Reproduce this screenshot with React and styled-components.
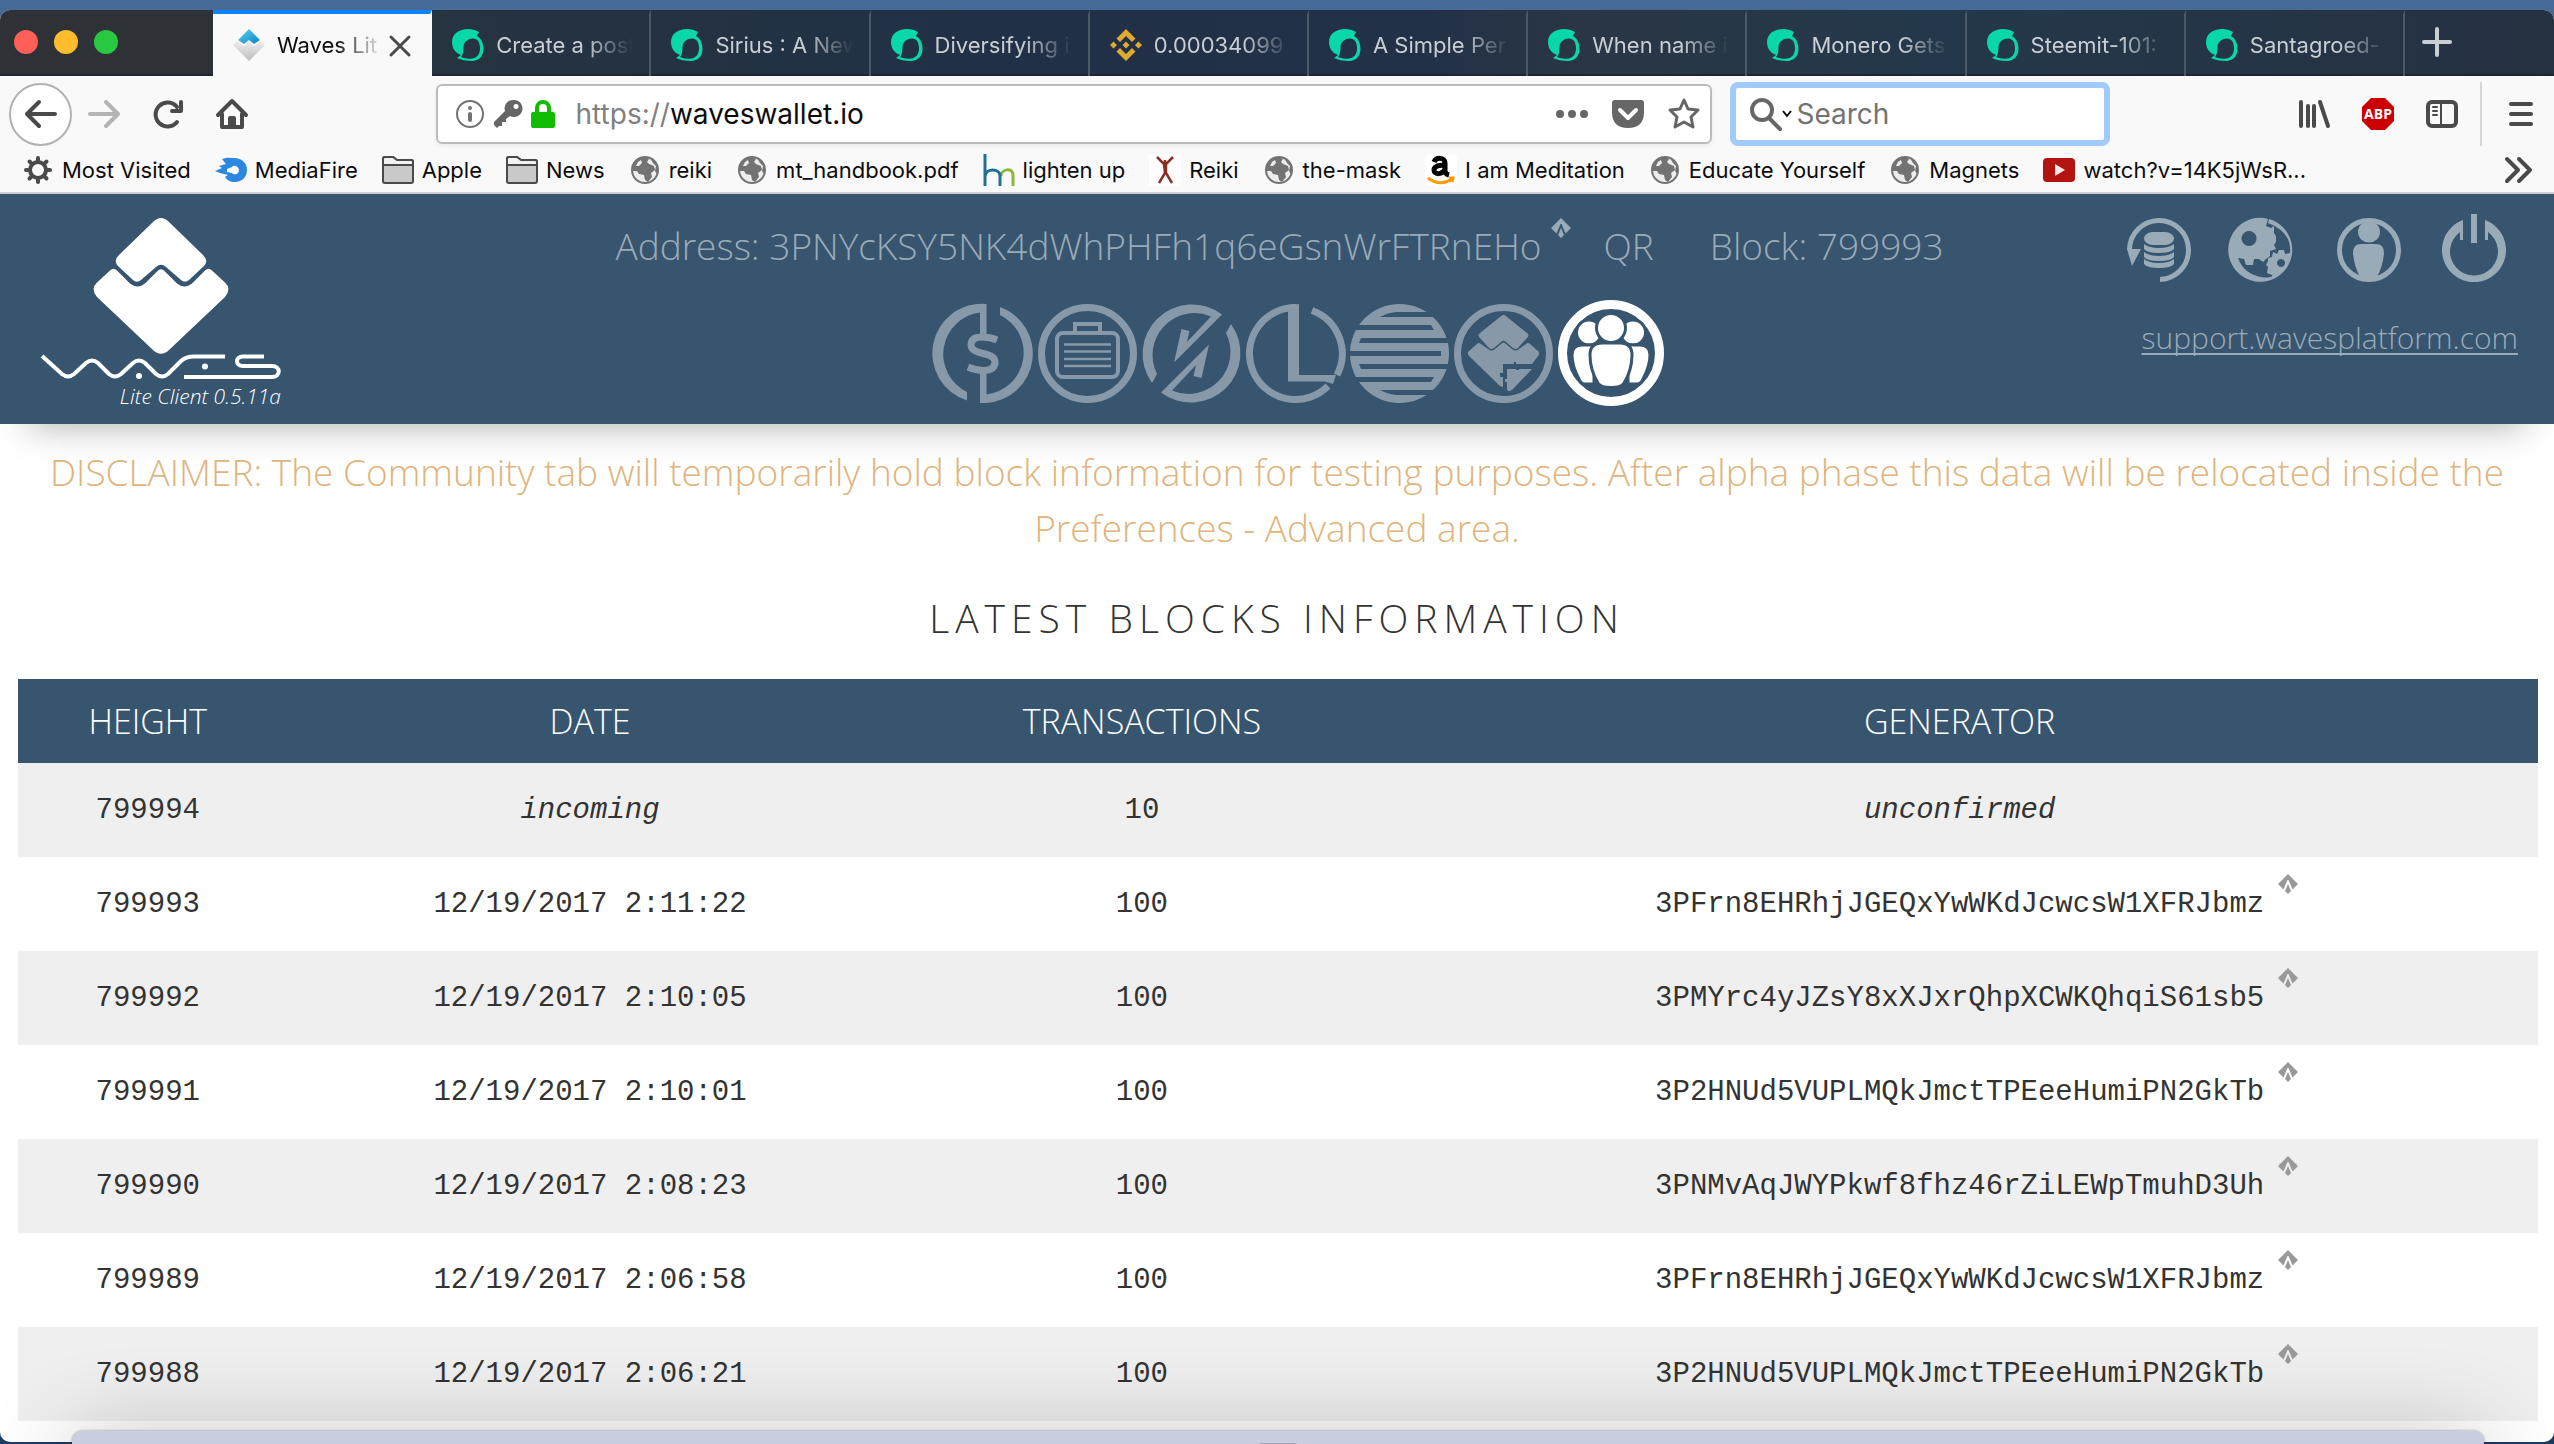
import React from 'react'
import styled, {createGlobalStyle} from 'styled-components'

// Colors
const colors = {
  primary: '#37556f',
  muted: '#9aabb8',
  nav: '#8799a9',
  warning: '#e0b47c',
  text: '#333333',
  stripe: '#efefef',
  chrome: '#f9f9fa',
  icon: '#4a4a4a',
  teal: '#07d7a9'
}

const GlobalStyle = createGlobalStyle`
  * {
    box-sizing: border-box;
  }
  body {
    margin: 0;
    background: #466a98;
    font-family: 'Open Sans', 'Noto Sans', sans-serif;
    color: ${colors.text};
  }
  button {
    padding: 0;
    border: 0;
    background: none;
    font: inherit;
    color: inherit;
    cursor: pointer;
  }
  svg {
    display: block;
    flex: none;
    overflow: visible;
  }
`

// Browser window
const Desktop = styled.div`
  height: 100vh;
  padding: 10px 0 2px;
  overflow: hidden;
  background: linear-gradient(#466a98 50%, #1d3a63);
`

const Window = styled.div`
  height: 100%;
  border-radius: 10px;
  overflow: hidden;
  background: #ffffff;
`

const TabBar = styled.div`
  display: flex;
  height: 66px;
  background: linear-gradient(90deg, #2e3236 0, #2e3236 213px, #263340 440px, #213047 40%, #223048 55%, #2a3645 62%, #24384b 75%, #263142);
  box-shadow: inset 0 -2px #1d2433;
`

const TrafficLights = styled.div`
  display: flex;
  gap: 16px;
  width: 213px;
  padding: 20px 14px;
`

const Light = styled.button`
  width: 24px;
  height: 24px;
  border-radius: 50%;
  background: ${props => props.$color};
`

const Tabs = styled.div`
  flex: 1;
  display: grid;
  grid-template-columns: repeat(10, 1fr);
`

const TabItem = styled.div`
  display: flex;
  align-items: center;
  min-width: 0;
  padding: 0 ${props => props.$active ? 14 : 16}px 0 20px;
  border-right: 2px solid ${props => props.$active ? 'transparent' : '#4d5866'};
  border-top: 4px solid ${props => props.$active ? '#0a84ff' : 'transparent'};
  background: ${props => props.$active ? colors.chrome : 'transparent'};
  color: ${props => props.$active ? '#0c0c0d' : '#c9ced3'};
`

const TabTitle = styled.button`
  flex: 1;
  min-width: 0;
  margin-left: 12px;
  overflow: hidden;
  font-family: Inter, sans-serif;
  font-size: 22px;
  line-height: 32px;
  text-align: left;
  white-space: nowrap;
  mask-image: linear-gradient(90deg, #000 calc(100% - 48px), transparent);
`

const NewTab = styled.button`
  display: flex;
  align-items: center;
  width: 149px;
  padding: 0 16px 2px;
`

const NavBar = styled.div`
  display: flex;
  align-items: center;
  height: 76px;
  padding: 0 20px 0 9px;
  background: ${colors.chrome};
`

const BackButton = styled.button`
  display: flex;
  align-items: center;
  justify-content: center;
  width: 63px;
  height: 63px;
  border: 2px solid #b1b1b1;
  border-radius: 50%;
  background: #ffffff;
`

const ToolButton = styled.button`
  width: 32px;
  height: 32px;
  margin: 0 16px;
`

const Spacer = styled.div`
  flex: 175 1 0;
`

const UrlBar = styled.div`
  flex: 1272 1 0;
  display: flex;
  align-items: center;
  gap: 8px;
  height: 60px;
  padding: 0 10px 0 16px;
  border: 2px solid #bcbcbc;
  border-radius: 6px;
  background: #ffffff;
  box-shadow: 0 2px 4px rgba(0, 0, 0, 0.06);
`

const Url = styled.label`
  flex: 1;
  display: flex;
  margin-left: 12px;
  font-family: Inter, sans-serif;
  font-size: 28px;
  line-height: 36px;
  color: #808080;
`

const UrlInput = styled.input`
  flex: 1;
  min-width: 0;
  padding: 0;
  border: 0;
  outline: 0;
  font: inherit;
  color: #0c0c0d;
`

const PageActions = styled.div`
  display: flex;
  gap: 24px;
`

const SearchBar = styled.label`
  display: flex;
  align-items: center;
  width: 380px;
  height: 64px;
  margin-left: 18px;
  padding: 0 12px 0 14px;
  border: 6px solid #a0cbff;
  border-radius: 8px;
  background: #ffffff;
`

const SearchInput = styled.input`
  width: 100%;
  margin-left: 4px;
  padding: 0;
  border: 0;
  outline: 0;
  font-family: Inter, sans-serif;
  font-size: 28px;
  line-height: 36px;
  &::placeholder {
    color: #737373;
    opacity: 1;
  }
`

const MenuButton = styled.button`
  display: flex;
  align-items: center;
  height: 64px;
  margin-left: 6px;
  padding-left: 26px;
  border-left: 2px solid #d7d7db;
`

const Bookmarks = styled.div`
  display: flex;
  align-items: center;
  gap: 24px;
  height: 42px;
  padding: 0 20px 4px 22px;
  border-bottom: 2px solid #d0d0d0;
  background: ${colors.chrome};
`

const Bookmark = styled.a`
  display: flex;
  align-items: center;
  gap: 8px;
  font-family: Inter, sans-serif;
  font-size: 22px;
  line-height: 32px;
  color: #0c0c0d;
  text-decoration: none;
  white-space: nowrap;
`

const More = styled.button`
  margin-left: auto;
`

// Wallet
const Header = styled.header`
  display: grid;
  grid-template-columns: 1fr auto 1fr;
  height: 230px;
  padding: 24px 36px 12px 41px;
  background: ${colors.primary};
  box-shadow: 0 30px 36px -30px rgba(0, 0, 0, 0.35);
`

const Brand = styled.div`
  display: flex;
  flex-direction: column;
  align-items: center;
  width: 240px;
`

const Version = styled.div`
  align-self: flex-end;
  font-size: 21px;
  font-style: italic;
  font-weight: 300;
  line-height: 32px;
  color: #ffffff;
`

const Account = styled.div`
  display: flex;
  flex-direction: column;
  align-items: center;
`

const AccountInfo = styled.div`
  display: flex;
  font-size: 37px;
  font-weight: 300;
  line-height: 56px;
  color: ${colors.muted};
  white-space: nowrap;
`

const Copy = styled.button`
  align-self: flex-start;
  margin-left: 10px;
`

const QrButton = styled.button`
  margin: 0 56px 0 32px;
`

const MainNav = styled.nav`
  display: flex;
  align-items: center;
  gap: 5px;
  height: 106px;
  margin: 26px 0 0 38px;
  color: ${colors.nav};
`

const Side = styled.div`
  display: flex;
  flex-direction: column;
  align-items: flex-end;
  gap: 36px;
  color: ${colors.muted};
`

const Utilities = styled.div`
  display: flex;
  gap: 41px;
  padding-right: 12px;
`

const Support = styled.a`
  font-size: 30px;
  font-weight: 300;
  line-height: 40px;
  color: inherit;
  text-underline-offset: 4px;
  text-decoration-thickness: 2px;
  text-decoration-skip-ink: none;
`

const Disclaimer = styled.p`
  margin: 20px 18px 34px;
  font-size: 37px;
  font-weight: 300;
  line-height: 56px;
  text-align: center;
  color: ${colors.warning};
`

const Title = styled.h1`
  margin: 0 0 33px;
  font-size: 39px;
  font-weight: 300;
  line-height: 56px;
  letter-spacing: 6px;
  text-align: center;
`

const BlockTable = styled.table`
  width: calc(100% - 34px);
  margin: 0 16px 0 18px;
  border-collapse: collapse;
  table-layout: fixed;
  text-align: center;
  th {
    height: 84px;
    padding: 0;
    background: ${colors.primary};
    color: #ffffff;
    font-size: 34px;
    font-weight: 300;
  }
  th:nth-child(1) {
    width: 10.3%;
  }
  th:nth-child(2) {
    width: 24.8%;
  }
  th:nth-child(3) {
    width: 19%;
  }
  td {
    height: 94px;
    padding: 0;
    font-family: 'Liberation Mono', monospace;
    font-size: 29px;
  }
  tbody tr:nth-child(odd) {
    background: ${colors.stripe};
  }
`

const Generator = styled.span`
  position: relative;
`

const CopyBadge = styled.button`
  position: absolute;
  left: 100%;
  top: -14px;
  margin-left: 14px;
  color: #999999;
`

// Window of another app, lying over the lower edge
const BackWindow = styled.div`
  position: fixed;
  left: 72px;
  right: 70px;
  bottom: -40px;
  height: 53px;
  border-radius: 10px;
  background: #c9cfe0;
  box-shadow: 0 0 3px rgba(0, 0, 0, 0.4), 0 10px 90px rgba(0, 0, 0, 0.3);
  &::after {
    content: '';
    display: block;
    width: 40px;
    height: 8px;
    margin: 12px auto;
    border-radius: 4px;
    background: #a3a3b8;
  }
`

// Icons
const Stroke = ({size = 32, color = colors.icon, width = 3, children}) => (
  <svg width={size} height={size} viewBox='0 0 32 32' fill='none' stroke={color} strokeWidth={width} strokeLinecap='round' strokeLinejoin='round'>
    {children}
  </svg>
)

const SteemIcon = () => (
  <svg width='32' height='32' viewBox='0 0 32 32' fill={colors.teal}>
    <path fillRule='evenodd' d='M16 0C20 0 24 1 27 3L25 7C29 9 31.500 14 31.500 20C31.500 27 27 32 20 32C14 32 9 31 5 29L9 26C3 24 0 19 0 13C0 5 7 0 16 0ZM21 9.500C15 9.500 11.500 14 11.500 18C11.500 22 11 26 9 28C13 29.500 16 30 20 29.500C25 29 28 25 28 19.500C28 13 25.500 9.500 21 9.500Z' />
  </svg>
)

const WavesFavicon = () => (
  <svg width='32' height='32' viewBox='0 0 32 32'>
    <defs>
      <linearGradient id='wavesTop' x2='1' y2='1'><stop stopColor='#5fd0ea' /><stop offset='1' stopColor='#0a86c9' /></linearGradient>
      <linearGradient id='wavesBottom' x2='0' y2='1'><stop stopColor='#eeeeee' /><stop offset='1' stopColor='#bdbdbd' /></linearGradient>
    </defs>
    <path fill='url(#wavesTop)' d='M16 0L27 11L21 15L16 11L11 15L5 11Z' />
    <path fill='url(#wavesBottom)' d='M4 12L11 17L16 12L21 17L28 12L32 16L16 32L0 16Z' />
  </svg>
)

const BinanceIcon = () => (
  <svg width='32' height='32' viewBox='0 0 32 32' fill='#e0aa2e'>
    <path d='M16 0L25.500 9.500L22 13L16 7L10 13L6.500 9.500ZM16 32L6.500 22.500L10 19L16 25L22 19L25.500 22.500ZM3.500 12.500L7 16L3.500 19.500L0 16ZM28.500 12.500L32 16L28.500 19.500L25 16ZM16 12.500L19.500 16L16 19.500L12.500 16Z' />
  </svg>
)

const GlobeIcon = () => (
  <svg width='32' height='32' viewBox='0 0 32 32'>
    <circle cx='16' cy='16' r='13' fill='#ededed' stroke='#737373' strokeWidth='2' />
    <path fill='#737373' d='M4 11C7 5 12 3 17 3L20 5L18 8L20 10L25 12L26 16L22 19L23 23L19 28L16 26L15 21L10 20L8 17L4 17ZM21 4C26 6 29 11 29 16L28 20L26 17L27 12L24 9Z' />
    <path fill='#ededed' d='M9 8L12 6L13 9L10 12L7 12Z' />
  </svg>
)

const FolderIcon = () => (
  <svg width='32' height='32' viewBox='0 0 32 32' fill='#c9c9c9' stroke='#4a4a4a' strokeWidth='2' strokeLinejoin='round'>
    <path d='M1 27V5Q1 3 3 3H11L15 6H29Q31 6 31 8V27Q31 29 29 29H3Q1 29 1 27Z' />
    <path fill='#f2f2f2' d='M1 11V5Q1 3 3 3H11L15 6H29Q31 6 31 8V11Z' />
  </svg>
)

const GearIcon = () => (
  <Stroke width={4}>
    <circle cx='16' cy='16' r='8' />
    <path d='M16 4V6M16 26V28M4 16H6M26 16H28M7.500 7.500L9 9M23 23L24.500 24.500M24.500 7.500L23 9M9 23L7.500 24.500' />
  </Stroke>
)

const MediaFireIcon = () => (
  <svg width='32' height='32' viewBox='0 0 32 32'>
    <path fill='#2b87e0' d='M7 5C12 3 16 4 19 4C27 4 32 9 32 16C32 23 27 28 20 28C15 28 12 26 10 23L13 21L5 19L0 17L7 14L4 12L11 10Z' />
    <path fill='#ffffff' d='M12 15L17 13C18 11 23 11 24 16C24 21 18 21 17 19L12 18Z' />
  </svg>
)

const HnIcon = () => (
  <svg width='32' height='32' viewBox='0 0 32 32' fill='none' strokeWidth='3'>
    <path stroke='#8cb83a' d='M18 22C18 15 30 13 30 21V32' />
    <path stroke='#1c7391' d='M2 0V32M2 22C3 14 17 14 17 22V32' />
  </svg>
)

const FigureIcon = () => (
  <svg width='32' height='32' viewBox='0 0 32 32'>
    <path fill='#ffffff' d='M0 0H32V32H0Z' />
    <path fill='none' stroke='#8a2f24' strokeWidth='2.500' d='M8 3L15 10L16 19L10 29M24 3L17 10V19L23 29M16 6V20' />
  </svg>
)

const AmazonIcon = () => (
  <svg width='32' height='32' viewBox='0 0 32 32' fill='none'>
    <rect width='32' height='32' rx='5' fill='#ffffff' />
    <path stroke='#000000' strokeWidth='5' d='M9 8C11 3 20 3 20 9V17Q20 20 24 21M20 11C13 11 9 12 9 16C9 21 18 21 20 15' />
    <path stroke='#ff9900' strokeWidth='3' d='M3 24Q15 33 27 25M24 24L28 24L27 28' />
  </svg>
)

const YoutubeIcon = () => (
  <svg width='32' height='32' viewBox='0 0 32 32'>
    <rect y='4' width='32' height='24' rx='4' fill='#b3140f' />
    <path fill='#f3e9e9' d='M12 10L22 16L12 22Z' />
  </svg>
)

const AbpIcon = () => (
  <svg width='32' height='32' viewBox='0 0 32 32'>
    <path fill='#cc0000' d='M9 0H23L32 9V23L23 32H9L0 23V9Z' />
    <text x='16' y='21' fill='#ffffff' fontFamily='Open Sans' fontSize='14' fontWeight='700' textAnchor='middle'>ABP</text>
  </svg>
)

const CopyIcon = () => (
  <svg width='20' height='20' viewBox='0 0 20 20' fill='currentColor'>
    <path d='M10 0L20 10L14.500 15.500L10.500 6H9.500L5.500 15.500L0 10ZM10 10L13 17L10 20L7 17Z' />
  </svg>
)

const Logo = () => (
  <svg width='136' height='136' viewBox='0 0 136 136' fill='#ffffff'>
    <path d='M60 4Q68 -4 76 4L110 37Q116 42.500 111 48L96 62Q92 65.500 88 62L73 49Q68 44.500 63 49L48 62Q44 65.500 40 62L25 48Q20 42.500 26 37Z' />
    <path d='M17 52.500Q20.500 49 24 52.500L37 65.500Q44.500 71.500 52 65.500L64.500 53Q68 49.500 71.500 53L84 65.500Q91.500 71.500 99 65.500L112 52.500Q115.500 49 119 52.500L132 64.500Q139 71 132 79L76 132Q68 139.500 60 132L4 79Q-3 71 4 64.500Z' />
  </svg>
)

const Wordmark = () => (
  <svg width='240' height='26' viewBox='0 0 240 26' fill='none' stroke='#ffffff' strokeWidth='4'>
    <path d='M1 2L21 20Q27 25 33 20L45 9Q51 4 57 9L68 20Q74 25 80 20L92 9Q98 4 104 9L115 20Q121 25 127 20L140 7Q145 2.500 153 2.500H184' />
    <path d='M223 2.500H202C194 2.500 194 12 202 12H231C240 12 240 23 231 23H143' />
    <g fill='#ffffff' stroke='none'>
      <circle cx='98' cy='22' r='3' />
      <circle cx='164' cy='12.500' r='3' />
    </g>
  </svg>
)

const NavIcon = ({size = 99, box = 99, children}) => (
  <svg width={size} height={size} viewBox={`0 0 ${box} ${box}`} fill='currentColor'>{children}</svg>
)

const Ring = () => <circle cx='49.500' cy='49.500' r='46' fill='none' stroke='currentColor' strokeWidth='7' />

const WalletIcon = () => (
  <NavIcon>
    <path d='M52.500 0A49.500 49.500 0 0 0 33 96.500V88A42 42 0 0 1 46 8.500V31H52.500ZM66 3A49.500 49.500 0 0 1 52.500 99H46V69H52.500V90.500A42 42 0 0 0 66 11Z' />
    <path fill='none' stroke='currentColor' strokeWidth='7' d='M63 36Q56 33 48 33Q37 33 37 41Q37 47 49 49.500Q61 52 61 58Q61 66.500 49 66.500Q42 66.500 34 63' />
  </NavIcon>
)

const PortfolioIcon = () => (
  <NavIcon>
    <Ring />
    <g fill='none' stroke='currentColor' strokeWidth='4'>
      <rect x='19' y='29' width='61' height='44' rx='6' />
      <path d='M37 28V20H62V28' />
      <path strokeWidth='2.500' d='M26 40.500H73M26 47.500H73M26 55H73M26 62H73' />
    </g>
  </NavIcon>
)

const ExchangeIcon = () => (
  <NavIcon>
    <path d='M80 10.500A49.500 49.500 0 0 0 10 79L15 70A42 42 0 0 1 69 12.500L45 38L47.500 27L39.500 25L32 58.500Z' />
    <path d='M80 10.500A49.500 49.500 0 0 0 10 79L15 70A42 42 0 0 1 69 12.500L45 38L47.500 27L39.500 25L32 58.500Z' transform='rotate(180 49.500 49.500)' />
  </NavIcon>
)

const LeasingIcon = () => (
  <NavIcon>
    <path fill='none' stroke='currentColor' strokeWidth='7' d='M50 3.500A46 46 0 1 0 82 82' />
    <path fill='none' stroke='currentColor' strokeWidth='7' d='M66 6.500A46 46 0 0 1 91 71' />
    <path d='M42 1L53 0V71H90L87 80L79 77.500H42Z' />
  </NavIcon>
)

const VotingIcon = () => (
  <NavIcon>
    <circle cx='49.500' cy='49.500' r='49.500' />
    <path fill={colors.primary} d='M30 13Q37 9 46 8H99V13ZM0 21H81L84 26H0ZM11 34H99V39H9ZM0 47H91V52H0ZM9 60H99V65H11ZM0 73H84L81 78H0ZM30 86H99V91H46Q37 90 30 86Z' />
  </NavIcon>
)

const DexIcon = () => (
  <NavIcon>
    <Ring />
    <path d='M46 13Q49.500 9 53 13L73 29Q76 31 73 34L64 44Q62 46 59 44L52 38Q49.500 35.500 47 38L40 44Q37 46 35 44L26 34Q23 31 26 29Z' />
    <path d='M23 40Q25 38 27 40L34 45Q37.500 48 41 45L47 40Q49.500 37 52 40L58 45Q61.500 48 65 45L72 40Q74 38 76 40L84 47Q86.500 49 84 52L78 60H62V58H60V60H49V69H46V73H49V83L46 82L15 52Q12.500 49 15 47Z' />
    <path d='M53 65H62V66H65V65H78L58 86Q53 89 53 84V78H51V75H53Z' />
  </NavIcon>
)

const CommunityIcon = () => (
  <NavIcon size={106} box={106}>
    <circle cx='53' cy='53' r='48.500' fill='none' stroke='#ffffff' strokeWidth='9' />
    <g fill='#ffffff' stroke={colors.primary} strokeWidth='3'>
      <circle cx='31' cy='32.500' r='12.500' />
      <circle cx='75' cy='32.500' r='12.500' />
      <path d='M14 55Q14 45 24 45H36V84H27Q23 84 21 79Q14 66 14 55ZM92 55Q92 45 82 45H70V84H79Q83 84 85 79Q92 66 92 55Z' />
      <circle cx='53' cy='28' r='14.500' />
      <path d='M32 55Q32 43 44 43H62Q74 43 74 55Q74 70 66 83Q63 87.500 53 87.500Q43 87.500 40 83Q32 70 32 55Z' />
    </g>
  </NavIcon>
)

const UtilIcon = ({children}) => (
  <svg width='64' height='64' viewBox='0 0 64 64' fill='currentColor'>{children}</svg>
)

const BackupIcon = () => (
  <UtilIcon>
    <path fill='none' stroke='currentColor' strokeWidth='5' d='M33 61.500A29.500 29.500 0 1 0 2.500 32' />
    <path d='M0 31H14L5 48Z' />
    <rect x='17' y='14' width='30' height='13' rx='9' />
    <path d='M17 26Q22 30 32 30T47 26V31Q44 35 32 35T17 31ZM17 34Q22 38 32 38T47 34V39Q44 43 32 43T17 39ZM17 41Q22 45 32 45T47 41V46Q44 50 32 50T17 46Z' />
  </UtilIcon>
)

const SettingsIcon = () => (
  <UtilIcon>
    <path fillRule='evenodd' d='M32 0L36 1L34 8L39 10L42 8V15L44 18V24L42 27L44 31L38 33L38 38L34 41L31 44L27 41L22 41L21 47L14 47L12 41L6 40Q12 57 32 59.500Q42 59.500 40 57L35 55L36 49L34 47L36 43L36 40L40 39L41 34L45 36L47 32L52 32L53 36L58 35Q60 14 36 5L37 1A32 32 0 1 1 32 0ZM17 13A7.500 7.500 0 1 0 17.100 13ZM49 41A4 4 0 1 0 49.100 41Z' />
  </UtilIcon>
)

const ProfileIcon = () => (
  <UtilIcon>
    <circle cx='32' cy='32' r='29.500' fill='none' stroke='currentColor' strokeWidth='5' />
    <ellipse cx='32' cy='14' rx='11' ry='10.500' />
    <path d='M16 35Q16 26 24 26H39Q47 26 47 35Q46 48 40 59H23Q17 48 16 35Z' />
  </UtilIcon>
)

const PowerIcon = () => (
  <UtilIcon>
    <path d='M21 2V22H18V14A24 24 0 1 0 46 14V22H43V2A32 32 0 1 1 21 2Z' />
    <path d='M29 -4H35V25H29Z' />
  </UtilIcon>
)

const tabs = [
  {title: 'Waves Lit', icon: WavesFavicon, active: true},
  {title: 'Create a post', icon: SteemIcon},
  {title: 'Sirius : A New', icon: SteemIcon},
  {title: 'Diversifying i', icon: SteemIcon},
  {title: '0.00034099', icon: BinanceIcon},
  {title: 'A Simple Per', icon: SteemIcon},
  {title: 'When name i', icon: SteemIcon},
  {title: 'Monero Gets', icon: SteemIcon},
  {title: 'Steemit-101:', icon: SteemIcon},
  {title: 'Santagroed-', icon: SteemIcon}
]

const bookmarks = [
  ['Most Visited', GearIcon],
  ['MediaFire', MediaFireIcon],
  ['Apple', FolderIcon],
  ['News', FolderIcon],
  ['reiki', GlobeIcon],
  ['mt_handbook.pdf', GlobeIcon],
  ['lighten up', HnIcon],
  ['Reiki', FigureIcon],
  ['the-mask', GlobeIcon],
  ['I am Meditation', AmazonIcon],
  ['Educate Yourself', GlobeIcon],
  ['Magnets', GlobeIcon],
  ['watch?v=14K5jWsR...', YoutubeIcon]
]

const navigation = [
  ['Wallet', WalletIcon],
  ['Portfolio', PortfolioIcon],
  ['Exchange', ExchangeIcon],
  ['Leasing', LeasingIcon],
  ['Voting', VotingIcon],
  ['Dex', DexIcon],
  ['Community', CommunityIcon]
]

const utilities = [
  ['Backup', BackupIcon],
  ['Settings', SettingsIcon],
  ['Profile', ProfileIcon],
  ['Log out', PowerIcon]
]

const blocks = [
  {height: 799993, date: '12/19/2017 2:11:22', generator: '3PFrn8EHRhjJGEQxYwWKdJcwcsW1XFRJbmz'},
  {height: 799992, date: '12/19/2017 2:10:05', generator: '3PMYrc4yJZsY8xXJxrQhpXCWKQhqiS61sb5'},
  {height: 799991, date: '12/19/2017 2:10:01', generator: '3P2HNUd5VUPLMQkJmctTPEeeHumiPN2GkTb'},
  {height: 799990, date: '12/19/2017 2:08:23', generator: '3PNMvAqJWYPkwf8fhz46rZiLEWpTmuhD3Uh'},
  {height: 799989, date: '12/19/2017 2:06:58', generator: '3PFrn8EHRhjJGEQxYwWKdJcwcsW1XFRJbmz'},
  {height: 799988, date: '12/19/2017 2:06:21', generator: '3P2HNUd5VUPLMQkJmctTPEeeHumiPN2GkTb'}
]

const BrowserTabs = () => (
  <TabBar>
    <TrafficLights>
      <Light $color='#ff5f57' aria-label='Close' />
      <Light $color='#ffbd2e' aria-label='Minimize' />
      <Light $color='#28c940' aria-label='Zoom' />
    </TrafficLights>
    <Tabs>
      {tabs.map(({title, icon: Icon, active}) => (
        <TabItem key={title} $active={active}>
          <Icon />
          <TabTitle>{title}</TabTitle>
          {active && (
            <button aria-label='Close tab'>
              <Stroke><path d='M7 8L25 26M25 8L7 26' /></Stroke>
            </button>
          )}
        </TabItem>
      ))}
    </Tabs>
    <NewTab aria-label='New tab'>
      <Stroke color='#c9ced3' width={4}><path d='M3 16H29M16 3V29' /></Stroke>
    </NewTab>
  </TabBar>
)

const BrowserNav = () => (
  <NavBar>
    <BackButton aria-label='Back'>
      <Stroke width={4}><path d='M2 16H30M14 4L2 16L14 28' /></Stroke>
    </BackButton>
    <ToolButton aria-label='Forward'>
      <Stroke width={4} color='#b4b4b4'><path d='M2 16H30M18 4L30 16L18 28' /></Stroke>
    </ToolButton>
    <ToolButton aria-label='Reload'>
      <Stroke width={4}><path d='M25 24A12 12 0 1 1 25 9M29 4V13H20' /></Stroke>
    </ToolButton>
    <ToolButton aria-label='Home'>
      <Stroke width={4}><path d='M2 17L16 3L30 17M6 16V29H26V16' /><path d='M14 27V20H18V27' /></Stroke>
    </ToolButton>
    <Spacer />
    <UrlBar>
      <Stroke color='#737373' width={2}>
        <circle cx='16' cy='16' r='13' />
        <path strokeWidth='4' d='M16 10V10.100M16 16V22' />
      </Stroke>
      <svg width='28' height='28' viewBox='0 0 28 28' fill='#666666'>
        <path fillRule='evenodd' d='M20 0A8.500 8.500 0 1 1 16 16L12 19V22H8V26H5L3 28L0 25V22L11 11A8.500 8.500 0 0 1 20 0ZM22 4A2.500 2.500 0 1 0 22.100 4Z' />
      </svg>
      <svg width='26' height='28' viewBox='0 0 26 28' fill='#12bc00'>
        <path fillRule='evenodd' d='M5 12V8A8 8 0 0 1 21 8V12H23Q25 12 25 14V26Q25 28 23 28H3Q1 28 1 26V14Q1 12 3 12ZM9 12H17V8A4 4 0 0 0 9 8Z' />
      </svg>
      <Url>
        https://
        <UrlInput aria-label='Address' defaultValue='waveswallet.io' />
      </Url>
      <PageActions>
        <button aria-label='Page actions'>
          <Stroke width={8} color='#666666'><path d='M4 16V16.100M16 16V16.100M28 16V16.100' /></Stroke>
        </button>
        <button aria-label='Save to Pocket'>
          <svg width='32' height='32' viewBox='0 0 32 32' fill='#666666'>
            <path d='M3 2H29Q32 2 32 5V14Q32 30 16 30Q0 30 0 14V5Q0 2 3 2Z' />
            <path fill='none' stroke='#ffffff' strokeWidth='4' strokeLinecap='round' strokeLinejoin='round' d='M8 12L16 20L24 12' />
          </svg>
        </button>
        <button aria-label='Bookmark this page'>
          <Stroke color='#666666'><path d='M16 2L20 11L30 12L23 19L25 29L16 24L7 29L9 19L2 12L12 11Z' /></Stroke>
        </button>
      </PageActions>
    </UrlBar>
    <SearchBar>
      <Stroke color='#666666' width={4}><circle cx='12' cy='12' r='10' /><path d='M19 20L30 31' /></Stroke>
      <svg width='10' height='8' viewBox='0 0 10 8' fill='none' stroke='#0c0c0d' strokeWidth='2'><path d='M1 1L5 6L9 1' /></svg>
      <SearchInput placeholder='Search' aria-label='Search' />
    </SearchBar>
    <Spacer />
    <ToolButton aria-label='Library'>
      <Stroke width={4}><path d='M3 4V28M10 8V28M16 8V28M22 4L30 28' /></Stroke>
    </ToolButton>
    <ToolButton aria-label='Adblock Plus'><AbpIcon /></ToolButton>
    <ToolButton aria-label='Sidebar'>
      <Stroke><rect x='2' y='4' width='28' height='24' rx='4' strokeWidth='4' /><path strokeWidth='2' d='M15 4V28M7 9H11M7 13H11M7 17H11' /></Stroke>
    </ToolButton>
    <MenuButton aria-label='Menu'>
      <svg width='26' height='26' viewBox='0 0 26 26' fill='none' stroke={colors.icon} strokeWidth='4' strokeLinecap='round'><path d='M3 3H23M3 13H23M3 23H23' /></svg>
    </MenuButton>
  </NavBar>
)

const BookmarkBar = () => (
  <Bookmarks>
    {bookmarks.map(([name, Icon]) => (
      <Bookmark key={name} href='#'><Icon />{name}</Bookmark>
    ))}
    <More aria-label='More bookmarks'>
      <Stroke width={4}><path d='M5 5L16 16L5 27M17 5L28 16L17 27' /></Stroke>
    </More>
  </Bookmarks>
)

const WalletHeader = () => (
  <Header>
    <Brand>
      <Logo />
      <Wordmark />
      <Version>Lite Client 0.5.11a</Version>
    </Brand>
    <Account>
      <AccountInfo>
        <span>Address: 3PNYcKSY5NK4dWhPHFh1q6eGsnWrFTRnEHo</span>
        <Copy aria-label='Copy address'><CopyIcon /></Copy>
        <QrButton>QR</QrButton>
        <span>Block: 799993</span>
      </AccountInfo>
      <MainNav>
        {navigation.map(([name, Icon]) => (
          <button key={name} aria-label={name}><Icon /></button>
        ))}
      </MainNav>
    </Account>
    <Side>
      <Utilities>
        {utilities.map(([name, Icon]) => (
          <button key={name} aria-label={name}><Icon /></button>
        ))}
      </Utilities>
      <Support href='#'>support.wavesplatform.com</Support>
    </Side>
  </Header>
)

class App extends React.Component {
  render () {
    return (
      <Desktop>
        <GlobalStyle />
        <Window>
          <BrowserTabs />
          <BrowserNav />
          <BookmarkBar />
          <WalletHeader />
          <main>
            <Disclaimer>
              DISCLAIMER: The Community tab will temporarily hold block information for testing purposes. After alpha phase this data will be relocated inside the Preferences - Advanced area.
            </Disclaimer>
            <Title>LATEST BLOCKS INFORMATION</Title>
            <BlockTable>
              <thead>
                <tr>
                  <th>HEIGHT</th>
                  <th>DATE</th>
                  <th>TRANSACTIONS</th>
                  <th>GENERATOR</th>
                </tr>
              </thead>
              <tbody>
                <tr>
                  <td>799994</td>
                  <td><em>incoming</em></td>
                  <td>10</td>
                  <td><em>unconfirmed</em></td>
                </tr>
                {blocks.map(block => (
                  <tr key={block.height}>
                    <td>{block.height}</td>
                    <td>{block.date}</td>
                    <td>100</td>
                    <td>
                      <Generator>
                        {block.generator}
                        <CopyBadge aria-label='Copy generator address'><CopyIcon /></CopyBadge>
                      </Generator>
                    </td>
                  </tr>
                ))}
              </tbody>
            </BlockTable>
          </main>
        </Window>
        <BackWindow />
      </Desktop>
    )
  }
}

export default App
